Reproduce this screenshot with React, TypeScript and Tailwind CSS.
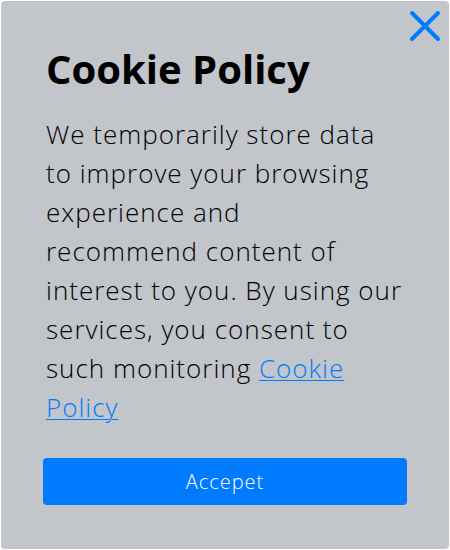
import React from 'react';

const lines = [
  'We temporarily store data',
  'to improve your browsing',
  'experience and',
  'recommend content of',
  'interest to you. By using our',
  'services, you consent to',
];

const CookiePolicy: React.FC = () => {
  return (
    <div className="w-[450px] h-[550px] bg-white p-px font-['Open_Sans',sans-serif]">
      <div className="relative h-full rounded-[4px] bg-[#c2c5c9] px-[42px] pt-[44px]">
        <button className="absolute top-[9px] right-[8px] text-[#007bff]" aria-label="Close">
          <svg width="32" height="32" viewBox="0 0 32 32" fill="none" stroke="currentColor" strokeWidth="4" strokeLinecap="round">
            <path d="M3 3 L29 29 M29 3 L3 29" />
          </svg>
        </button>

        <h1 className="pl-[3px] text-[40px] leading-[48px] font-bold text-black">Cookie Policy</h1>

        <p className="mt-[22px] pl-[3px] text-[26px] leading-[39px] font-light text-black tracking-[1px]">
          {lines.map((l) => (
            <span key={l} className="block whitespace-nowrap">{l}</span>
          ))}
          <span>such monitoring </span>
          <a href="#" className="text-[#007bff] underline decoration-1 underline-offset-2">
            Cookie
            <br />
            Policy
          </a>
        </p>

        <button className="mt-[31px] w-full h-[47px] rounded-[4px] bg-[#007bff] text-white text-[20px] font-light tracking-[1px]">
          Accepet
        </button>
      </div>
    </div>
  );
};

export default function App() {
  return <CookiePolicy />;
}
